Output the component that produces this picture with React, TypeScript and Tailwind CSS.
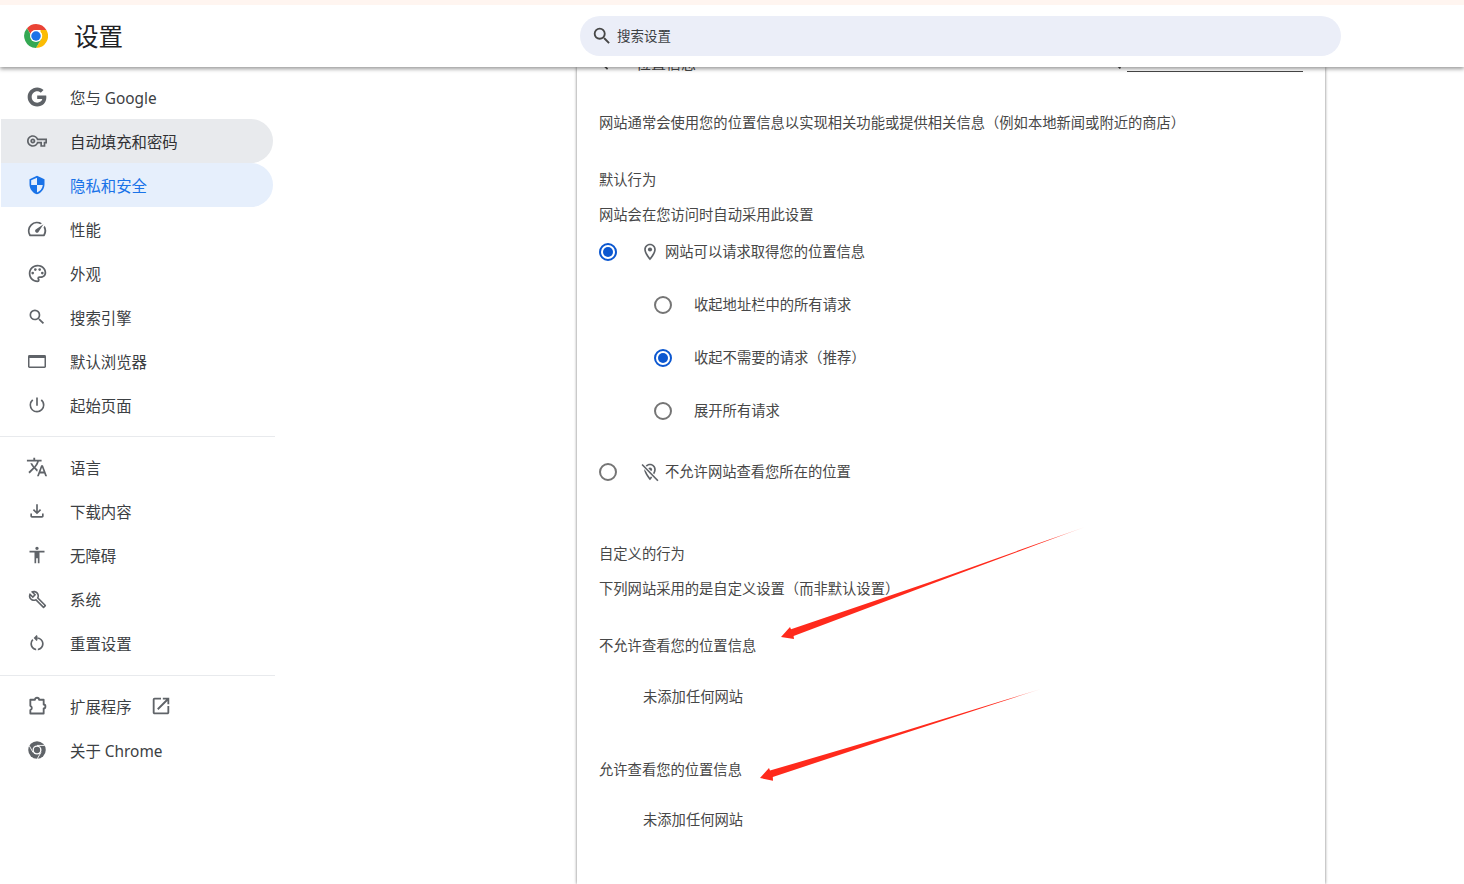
import React from "react";

const FONT = "[font-family:'Noto_Sans','Noto_Sans_CJK_SC',sans-serif]";

function Ico({ d, className = "w-5 h-5", children, view = "0 0 24 24" }: { d?: string; className?: string; children?: React.ReactNode; view?: string }) {
  return (
    <svg viewBox={view} className={`${className} shrink-0`} fill="currentColor" aria-hidden="true">
      {d ? <path d={d} /> : null}
      {children}
    </svg>
  );
}

const P = {
  search: "M15.5 14h-.79l-.28-.27A6.471 6.471 0 0 0 16 9.5 6.5 6.5 0 1 0 9.5 16c1.61 0 3.09-.59 4.23-1.57l.27.28v.79l5 4.99L20.49 19l-4.99-5zm-6 0C7.01 14 5 11.99 5 9.5S7.01 5 9.5 5 14 7.01 14 9.5 11.99 14 9.5 14z",
  key: "M22 19h-6v-4h-2.68c-1.14 2.42-3.6 4-6.32 4-3.86 0-7-3.14-7-7s3.14-7 7-7c2.72 0 5.17 1.58 6.32 4H24v6h-2v4zm-4-2h2v-4h2v-2H11.94l-.23-.67C11.01 8.34 9.11 7 7 7c-2.76 0-5 2.24-5 5s2.24 5 5 5c2.11 0 4.01-1.34 4.71-3.33l.23-.67H18v4zM7 15c-1.65 0-3-1.35-3-3s1.35-3 3-3 3 1.35 3 3-1.35 3-3 3zm0-4c-.55 0-1 .45-1 1s.45 1 1 1 1-.45 1-1-.45-1-1-1z",
  shield: "M12 1L3 5v6c0 5.55 3.84 10.74 9 12 5.16-1.26 9-6.45 9-12V5l-9-4zm0 10.99h7c-.53 4.12-3.28 7.79-7 8.94V12H5V6.3l7-3.11v8.8z",
  speed: "M20.38 8.57l-1.23 1.85a8 8 0 0 1-.22 7.58H5.07A8 8 0 0 1 15.58 6.85l1.85-1.23A10 10 0 0 0 3.35 19a2 2 0 0 0 1.72 1h13.85a2 2 0 0 0 1.74-1 10 10 0 0 0-.27-10.44zm-9.79 6.84a2 2 0 0 0 2.83 0l5.66-8.49-8.49 5.66a2 2 0 0 0 0 2.83z",
  palette: "M12 22C6.49 22 2 17.51 2 12S6.49 2 12 2s10 4.04 10 9c0 3.31-2.69 6-6 6h-1.77c-.28 0-.5.22-.5.5 0 .12.05.23.13.33.41.47.64 1.06.64 1.67A2.5 2.5 0 0 1 12 22zm0-18c-4.41 0-8 3.59-8 8s3.59 8 8 8c.28 0 .5-.22.5-.5a.54.54 0 0 0-.14-.35c-.41-.46-.63-1.05-.63-1.65a2.5 2.5 0 0 1 2.5-2.5H16c2.21 0 4-1.79 4-4 0-3.86-3.59-7-8-7z",
  power: "M13 3h-2v10h2V3zm4.83 2.17l-1.42 1.42A6.92 6.92 0 0 1 19 12c0 3.87-3.13 7-7 7A6.995 6.995 0 0 1 7.58 6.58L6.17 5.17A8.932 8.932 0 0 0 3 12a9 9 0 0 0 18 0c0-2.74-1.23-5.18-3.17-6.83z",
  translate: "M12.87 15.07l-2.54-2.51.03-.03c1.74-1.94 2.98-4.17 3.71-6.53H17V4h-7V2H8v2H1v1.99h11.17C11.5 7.92 10.44 9.75 9 11.35 8.07 10.32 7.3 9.19 6.69 8h-2c.73 1.63 1.73 3.17 2.98 4.56l-5.09 5.02L4 19l5-5 3.11 3.11.76-2.04zM18.5 10h-2L12 22h2l1.12-3h4.75L21 22h2l-4.5-12zm-2.62 7l1.62-4.33L19.12 17h-3.24z",
  download: "M18 15v3H6v-3H4v3c0 1.1.9 2 2 2h12c1.1 0 2-.9 2-2v-3h-2zm-1-4l-1.41-1.41L13 12.17V4h-2v8.17L8.41 9.59 7 11l5 5 5-5z",
  access: "M12 2c1.1 0 2 .9 2 2s-.9 2-2 2-2-.9-2-2 .9-2 2-2zm9 7h-6v13h-2v-6h-2v6H9V9H3V7h18v2z",
  build: "M22.61 18.99l-9.08-9.08c.93-2.34.45-5.1-1.44-7C9.79.61 6.21.4 3.66 2.26L7.5 6.11 6.08 7.52 2.25 3.69C.39 6.23.6 9.82 2.9 12.11c1.86 1.86 4.57 2.35 6.89 1.48l9.11 9.11c.39.39 1.02.39 1.41 0l2.3-2.3c.4-.38.4-1.01 0-1.41zm-3 1.6l-9.46-9.46c-.61.45-1.29.72-2 .82-1.36.2-2.79-.21-3.83-1.25C3.37 9.76 2.93 8.5 3 7.26l3.09 3.09 4.24-4.24-3.09-3.09c1.24-.07 2.49.37 3.44 1.31a4.469 4.469 0 0 1 1.24 3.96 4.35 4.35 0 0 1-.88 1.96l9.46 9.46-.9.88z",
  restore: "M6 13c0-1.65.67-3.15 1.76-4.24L6.34 7.34A8.014 8.014 0 0 0 4 13c0 4.08 3.05 7.44 7 7.93v-2.02c-2.83-.48-5-2.94-5-5.91zm14 0c0-4.42-3.58-8-8-8-.06 0-.12.01-.18.01l1.09-1.09L11.5 2.5 8 6l3.5 3.5 1.41-1.41-1.08-1.08c.06 0 .12-.01.17-.01 3.31 0 6 2.69 6 6 0 2.97-2.17 5.43-5 5.91v2.02c3.95-.49 7-3.85 7-7.93z",
  open: "M19 19H5V5h7V3H5a2 2 0 0 0-2 2v14c0 1.1.9 2 2 2h14c1.1 0 2-.9 2-2v-7h-2v7zM14 3v2h3.59l-9.83 9.83 1.41 1.41L19 6.41V10h2V3h-7z",
  pin: "M12 2C8.13 2 5 5.13 5 9c0 5.25 7 13 7 13s7-7.75 7-13c0-3.87-3.13-7-7-7zM7 9c0-2.76 2.24-5 5-5s5 2.24 5 5c0 2.88-2.88 7.19-5 9.88C9.92 16.21 7 11.85 7 9z",
};

function GoogleG({ className }: { className?: string }) {
  return (
    <svg viewBox="0 0 24 24" className={`${className} shrink-0`} fill="currentColor" aria-hidden="true">
      <path d="M12.2 1.6C6.4 1.6 1.8 6.3 1.8 12s4.6 10.4 10.4 10.4c6 0 10-4.2 10-10.1 0-.8-.1-1.3-.2-1.9h-9.8v3.9h5.6c-.5 2.3-2.6 3.9-5.6 3.9-3.3 0-6-2.8-6-6.2s2.7-6.2 6-6.2c1.6 0 2.9.6 3.9 1.5l3-3C17.3 2.6 15 1.6 12.2 1.6z" />
    </svg>
  );
}

function WebIcon({ className }: { className?: string }) {
  return (
    <svg viewBox="0 0 18 13" className={className} aria-hidden="true">
      <rect x="0" y="0" width="18" height="13" rx="1.4" fill="currentColor" />
      <rect x="1.5" y="3" width="15" height="8.5" fill="#fff" />
    </svg>
  );
}

function ExtIcon({ className }: { className?: string }) {
  return (
    <svg viewBox="0 0 24 24" className={className} fill="none" stroke="currentColor" strokeWidth="2.2" strokeLinejoin="round" aria-hidden="true">
      <path d="M4 4.5h5.5c0-3.2 5-3.2 5 0H20v5.7c2.8 0 2.8 4.6 0 4.6V21H4v-4c2.4-1 2.4-4.2 0-5.2V4.5z" />
    </svg>
  );
}

function ChromeLogo({ className }: { className?: string }) {
  return (
    <svg viewBox="0 0 48 48" className={className} aria-hidden="true">
      <path fill="#ea4335" d="M24 0a24 24 0 0 1 20.8 12H24a12 12 0 0 0-11.3 8L6 8.6A24 24 0 0 1 24 0z" />
      <path fill="#fbbc04" d="M44.8 12A24 24 0 0 1 24 48l10.4-18A12 12 0 0 0 33 15.5L33 12z" />
      <path fill="#34a853" d="M6 8.6 16 26a12 12 0 0 0 18.4 4L24 48A24 24 0 0 1 6 8.6z" />
      <circle cx="24" cy="24" r="12" fill="#fff" />
      <circle cx="24" cy="24" r="9.5" fill="#1a73e8" />
    </svg>
  );
}

function GreyChrome({ className }: { className?: string }) {
  return (
    <svg viewBox="0 0 24 24" className={className} aria-hidden="true">
      <circle cx="12" cy="12" r="10.5" fill="#5f6368" />
      <path d="M12 6.5h9" stroke="#fff" strokeWidth="1.1" />
      <path d="M7.3 15 2.8 7" stroke="#fff" strokeWidth="1.1" />
      <path d="M16.8 14.8 12.3 22.6" stroke="#fff" strokeWidth="1.1" />
      <circle cx="12" cy="12" r="5.4" fill="#fff" />
      <circle cx="12" cy="12" r="3.8" fill="#5f6368" />
    </svg>
  );
}

function NavItem({ icon, label, state, extra }: { icon: React.ReactNode; label: string; state?: "gray" | "blue"; extra?: React.ReactNode }) {
  const bg = state === "gray" ? "bg-[#e8eaed] text-[#303134]" : state === "blue" ? "bg-[#e6effc] text-[#1a73e8]" : "text-[#3c4043]";
  const ic = state === "blue" ? "text-[#1a73e8]" : "text-[#5f6368]";
  return (
    <div className={`ml-px flex h-11 w-[272px] items-center rounded-r-[22px] pl-[26px] text-[15.4px] ${bg}`}>
      <span className={`flex w-5 items-center justify-center ${ic}`}>{icon}</span>
      <span className="ml-[23px] whitespace-nowrap pt-[3px]">{label}</span>
      {extra}
    </div>
  );
}

function Radio({ on }: { on?: boolean }) {
  return (
    <span className={`flex h-[18px] w-[18px] shrink-0 items-center justify-center rounded-full border-2 ${on ? "border-[#0b57d0]" : "border-[#757575]"}`}>
      {on ? <span className="h-[10px] w-[10px] rounded-full bg-[#0b57d0]" /> : null}
    </span>
  );
}

function Line({ className = "", children }: { className?: string; children: React.ReactNode }) {
  return <div className={`flex h-5 items-center whitespace-nowrap ${className}`}>{children}</div>;
}

function Arrow({ points, id, x1, y1, x2, y2 }: { points: string; id: string; x1: number; y1: number; x2: number; y2: number }) {
  return (
    <>
      <defs>
        <linearGradient id={id} gradientUnits="userSpaceOnUse" x1={x1} y1={y1} x2={x2} y2={y2}>
          <stop offset="0" stopColor="#ff2a1c" />
          <stop offset="0.88" stopColor="#ff2a1c" />
          <stop offset="1" stopColor="#ff2a1c" stopOpacity="0.25" />
        </linearGradient>
      </defs>
      <polygon points={points} fill={`url(#${id})`} />
    </>
  );
}

export default function App() {
  return (
    <div className={`relative flex h-[884px] w-[1464px] flex-col overflow-hidden bg-white ${FONT}`}>
      <div className="relative z-20 h-[5px] bg-[#fff5f0]" />
      <header className="relative z-10 flex h-[62px] items-center bg-white pl-6 shadow-[0_2px_4px_rgba(0,0,0,0.4)]">
        <div className="flex w-[556px] items-center">
          <ChromeLogo className="h-6 w-6" />
          <span className="ml-[26px] pt-[2px] text-[24.5px] text-[#202124]">设置</span>
        </div>
        <div className="flex h-10 w-[761px] items-center rounded-full bg-[#ebeef8] pl-[11px] text-[13.5px] text-[#3c4043]">
          <Ico d={P.search} className="h-[22px] w-[22px] text-[#474747]" />
          <span className="ml-[4px]">搜索设置</span>
        </div>
      </header>

      <div className="flex min-h-0 flex-1">
        <nav className="w-[275px] shrink-0 pt-2">
          <NavItem icon={<GoogleG className="h-[22px] w-[22px]" />} label="您与 Google" />
          <NavItem icon={<Ico d={P.key} className="h-5 w-5" />} label="自动填充和密码" state="gray" />
          <NavItem icon={<Ico d={P.shield} className="h-5 w-5" />} label="隐私和安全" state="blue" />
          <NavItem icon={<Ico d={P.speed} className="h-[22px] w-[22px]" />} label="性能" />
          <NavItem
            icon={
              <Ico d={P.palette} className="h-[21px] w-[21px]">
                <circle cx="6.5" cy="11.5" r="1.5" />
                <circle cx="9.5" cy="7.5" r="1.5" />
                <circle cx="14.5" cy="7.5" r="1.5" />
                <circle cx="17.5" cy="11.5" r="1.5" />
              </Ico>
            }
            label="外观"
          />
          <NavItem icon={<Ico d={P.search} className="h-5 w-5" />} label="搜索引擎" />
          <NavItem icon={<WebIcon className="h-[13px] w-[18px]" />} label="默认浏览器" />
          <NavItem icon={<Ico d={P.power} className="h-5 w-5" />} label="起始页面" />
          <div className="mb-2 mt-[9px] h-px bg-[#e8eaed]" />
          <NavItem icon={<Ico d={P.translate} className="h-[22px] w-[22px]" />} label="语言" />
          <NavItem icon={<Ico d={P.download} className="h-5 w-5" />} label="下载内容" />
          <NavItem icon={<Ico d={P.access} className="h-5 w-5" />} label="无障碍" />
          <NavItem icon={<Ico d={P.build} className="h-[19px] w-[19px]" />} label="系统" />
          <NavItem icon={<Ico d={P.restore} className="h-5 w-5" />} label="重置设置" />
          <div className="mb-2 mt-[10px] h-px bg-[#e8eaed]" />
          <NavItem
            icon={<ExtIcon className="h-5 w-5" />}
            label="扩展程序"
            extra={<Ico d={P.open} className="ml-[18px] h-[22px] w-[22px] text-[#5f6368]" />}
          />
          <NavItem icon={<GreyChrome className="h-5 w-5" />} label="关于 Chrome" />
        </nav>

        <main className="ml-[302px] w-[748px] shrink-0 bg-white pl-[22px] text-[14.3px] text-[#474747] shadow-[0_0_3px_rgba(0,0,0,0.55)]">
          <Line className="-ml-[2px] -mt-[15px] pr-[22px]">
            <svg viewBox="0 0 24 24" className="mt-[2px] h-5 w-5 shrink-0 text-[#474747]" fill="currentColor" aria-hidden="true">
              <path d="M20 11H7.83l5.59-5.59L12 4l-8 8 8 8 1.41-1.41L7.83 13H20v-2z" />
            </svg>
            <span className="ml-[19px] pt-[2px] text-[15px]">位置信息</span>
            <span className="ml-auto flex items-end">
              <Ico d={P.search} className="h-5 w-5 text-[#474747]" />
              <span className="ml-[3px] h-5 w-[176px] border-b border-[#474747]" />
            </span>
          </Line>
          <Line className="mt-[41px]">网站通常会使用您的位置信息以实现相关功能或提供相关信息（例如本地新闻或附近的商店）</Line>
          <Line className="mt-[37px]">默认行为</Line>
          <Line className="mt-[15px]">网站会在您访问时自动采用此设置</Line>
          <Line className="mt-[17px]">
            <Radio on />
            <Ico d={P.pin} className="ml-[23px] h-5 w-5 text-[#5f6368]">
              <circle cx="12" cy="9" r="2.5" />
            </Ico>
            <span className="ml-[5px]">网站可以请求取得您的位置信息</span>
          </Line>
          <Line className="mt-[33px] pl-[55px]">
            <Radio />
            <span className="ml-[22px]">收起地址栏中的所有请求</span>
          </Line>
          <Line className="mt-[33px] pl-[55px]">
            <Radio on />
            <span className="ml-[22px]">收起不需要的请求（推荐）</span>
          </Line>
          <Line className="mt-[33px] pl-[55px]">
            <Radio />
            <span className="ml-[22px]">展开所有请求</span>
          </Line>
          <Line className="mt-[41px]">
            <Radio />
            <Ico d={P.pin} className="ml-[23px] h-5 w-5 text-[#5f6368]">
              <circle cx="12" cy="9" r="2.5" />
              <path d="M2.5 3 21.5 22.5" stroke="#fff" strokeWidth="4.5" />
              <path d="M2.5 3 21.5 22.5" stroke="currentColor" strokeWidth="2" />
            </Ico>
            <span className="ml-[5px]">不允许网站查看您所在的位置</span>
          </Line>
          <Line className="mt-[62px]">自定义的行为</Line>
          <Line className="mt-[15px]">下列网站采用的是自定义设置（而非默认设置）</Line>
          <Line className="mt-[37px]">不允许查看您的位置信息</Line>
          <Line className="mt-[31px] pl-[44px]">未添加任何网站</Line>
          <Line className="mt-[53px]">允许查看您的位置信息</Line>
          <Line className="mt-[30px] pl-[44px]">未添加任何网站</Line>
        </main>
      </div>

      <svg className="pointer-events-none absolute inset-0 z-20 h-full w-full" viewBox="0 0 1464 884" aria-hidden="true">
        <Arrow
          id="a1"
          x1={781}
          y1={637}
          x2={1085}
          y2={527}
          points="781,637 790,627 791,629.2 930,582 1040,542.8 1085,527 1040,543.6 930,584.6 793.6,636 794,639"
        />
        <Arrow
          id="a2"
          x1={760}
          y1={778}
          x2={1041}
          y2={689}
          points="760,778 769,768 770,770.6 900,732.3 1000,701.4 1041,689 1000,702.2 900,734.8 772.8,777 773,780.7"
        />
      </svg>
    </div>
  );
}
